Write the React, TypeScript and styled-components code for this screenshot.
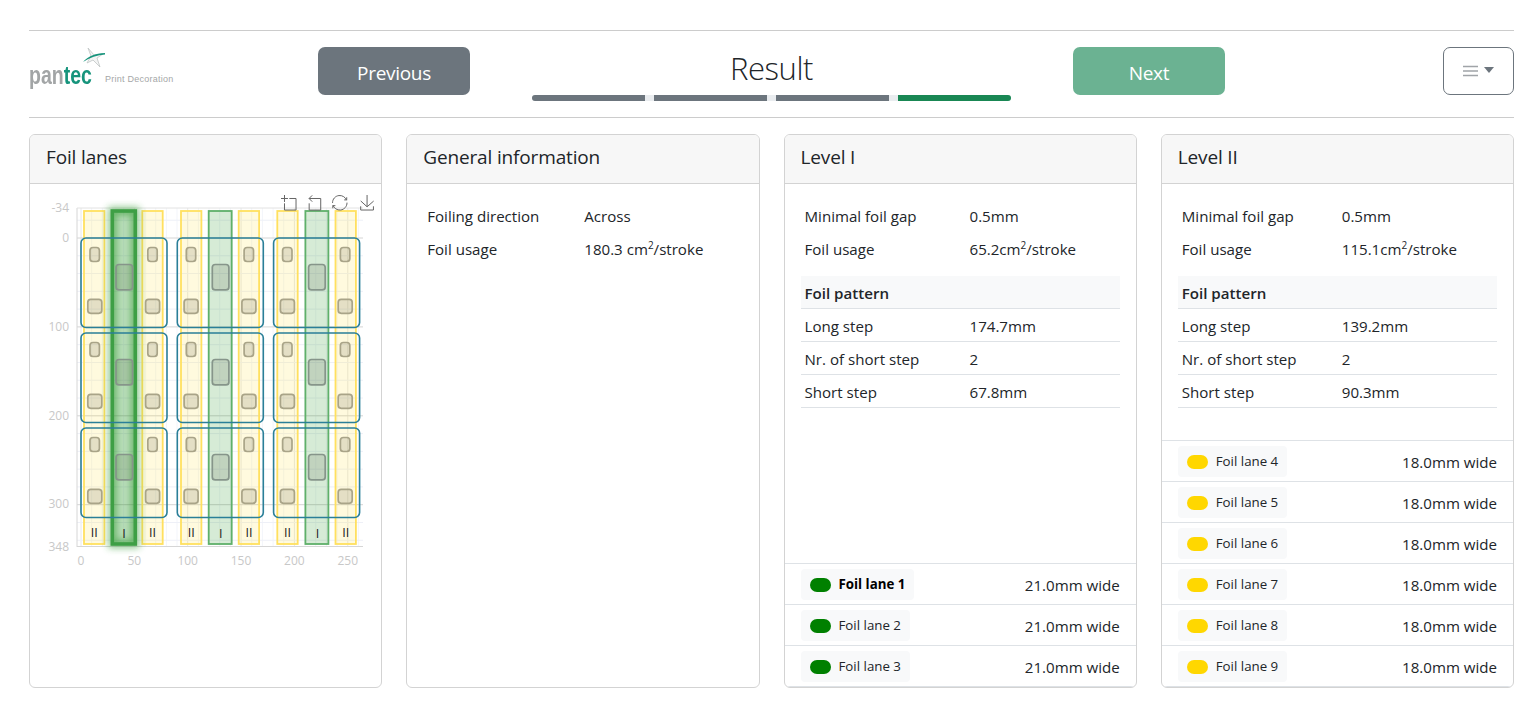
import React, { FC } from "react";
import styled, { createGlobalStyle } from "styled-components";

const FONT = `"Open Sans", "Noto Sans", sans-serif`;

const GlobalStyle = createGlobalStyle`
  html, body {
    margin: 0;
    padding: 0;
    background: #fff;
    color: #212529;
    font-family: ${FONT};
  }
  * { box-sizing: border-box; }
`;

const Page = styled.div`
  width: 1526px;
  height: 705px;
  padding: 30px 12px 0 29px;
  overflow: hidden;
`;

const Header = styled.header`
  display: grid;
  grid-template-columns: 289px 152px 62px 479px 62px 152px 218px 71px;
  height: 88px;
  padding-top: 16px;
  border-top: 1px solid #ccc;
  border-bottom: 1px solid #ccc;
`;

const LogoBox = styled.div`
  grid-column: 1;
  position: relative;
  height: 48px;
`;

const LogoWord = styled.span`
  position: absolute;
  left: 0;
  top: 14px;
  font-family: "Liberation Sans", sans-serif;
  font-size: 25px;
  line-height: 28px;
  font-weight: 700;
  color: #a2a5a6;
  transform: scaleX(0.78);
  transform-origin: left center;
`;

const LogoAccent = styled.span`
  color: #16947c;
`;

const LogoTag = styled.span`
  position: absolute;
  left: 76px;
  top: 26px;
  font-family: "Liberation Sans", sans-serif;
  font-size: 9px;
  line-height: 12px;
  letter-spacing: 0.25px;
  white-space: nowrap;
  color: #a5a7a8;
`;

const LogoStar = styled.svg`
  position: absolute;
  left: 52px;
  top: 0;
`;

const NavButton = styled.button<{ $next?: boolean }>`
  grid-column: ${(p) => (p.$next ? 6 : 2)};
  height: 48px;
  padding: 4px 0 0;
  border: 0;
  border-radius: 7px;
  font: 400 19px/24px ${FONT};
  letter-spacing: -0.3px;
  color: #fff;
  background: ${(p) => (p.$next ? "#6bb292" : "#6c757d")};
`;

const Center = styled.div`
  grid-column: 4;
  display: flex;
  flex-direction: column;
  height: 54px;
`;

const Title = styled.h1`
  margin: 0;
  height: 48px;
  font: 300 31px/42px ${FONT};
  letter-spacing: -0.4px;
  text-align: center;
  color: #212529;
`;

const Progress = styled.div`
  display: flex;
  gap: 9px;
  height: 6px;
  border-radius: 3px;
  overflow: hidden;
  background: #e9ecef;
`;

const ProgressStep = styled.div<{ $active?: boolean }>`
  flex: 1;
  background: ${(p) => (p.$active ? "#198754" : "#6c757d")};
`;

const MenuButton = styled.button`
  grid-column: 8;
  display: flex;
  align-items: center;
  justify-content: center;
  gap: 6px;
  height: 48px;
  padding: 0;
  border: 1px solid #6c757d;
  border-radius: 7px;
  background: #fff;
`;

const Caret = styled.span`
  width: 0;
  height: 0;
  margin-bottom: 2px;
  border-top: 6px solid #6c757d;
  border-left: 5.5px solid transparent;
  border-right: 5.5px solid transparent;
`;

const Cards = styled.main`
  display: grid;
  grid-template-columns: repeat(4, 1fr);
  gap: 24px;
  height: 554px;
  margin-top: 16px;
`;

const Card = styled.section`
  display: flex;
  flex-direction: column;
  min-width: 0;
  overflow: hidden;
  border: 1px solid #d3d3d3;
  border-radius: 6px;
`;

const CardHeader = styled.h2`
  flex: none;
  height: 49px;
  margin: 0;
  padding: 0 16px;
  border-bottom: 1px solid #d3d3d3;
  background: #f7f7f7;
  font: 400 19px/45px ${FONT};
  letter-spacing: -0.15px;
  color: #212529;
`;

const CardBody = styled.div`
  flex: 1;
  min-height: 0;
  padding: 16px 16px 0;
`;

const ChartBody = styled.div`
  flex: 1;
  min-height: 0;
`;

const InfoGrid = styled.dl<{ $label: number }>`
  display: grid;
  grid-template-columns: ${(p) => p.$label}px 1fr;
  margin: 0 0 11px;
`;

const InfoLabel = styled.dt`
  height: 32.5px;
  padding: 0 4px;
  font: 400 15.1px/33px ${FONT};
`;

const InfoValue = styled.dd`
  height: 32.5px;
  margin: 0;
  padding: 0 4px;
  font: 400 15.1px/33px ${FONT};
  sup {
    font-size: 10px;
    line-height: 0;
  }
`;

const PatternTitle = styled.div`
  height: 33px;
  padding: 0 4px;
  border-bottom: 1px solid #dee2e6;
  background: #f8f9fa;
  font: 600 15.1px/34px ${FONT};
  color: #212529;
`;

const PatternRow = styled.div<{ $label: number }>`
  display: grid;
  grid-template-columns: ${(p) => p.$label}px 1fr;
  height: 33px;
  padding: 0 4px;
  border-bottom: 1px solid #dee2e6;
  font: 400 15.1px/34px ${FONT};
`;

const LaneList = styled.ul`
  flex: none;
  margin: 0;
  padding: 0;
  list-style: none;
  border-bottom: 1px solid #dee2e6;
`;

const LaneRow = styled.li`
  display: flex;
  align-items: center;
  justify-content: space-between;
  height: 41px;
  padding: 0 16px;
  border-top: 1px solid #dee2e6;
`;

const LaneChip = styled.div`
  display: flex;
  align-items: center;
  gap: 8px;
  height: 31px;
  padding: 0 9px;
  border-radius: 4px;
  background: #f8f9fa;
`;

const Swatch = styled.span<{ $color: string }>`
  width: 21px;
  height: 14px;
  margin-top: 2px;
  border-radius: 7px;
  background: ${(p) => p.$color};
`;

const LaneName = styled.span<{ $bold?: boolean }>`
  font: ${(p) => (p.$bold ? 700 : 400)} 13.3px/18px ${FONT};
  color: ${(p) => (p.$bold ? "#000" : "#212529")};
`;

const LaneWidth = styled.span`
  margin-top: 2px;
  font: 400 15.1px/20px ${FONT};
  color: #212529;
`;

const AxisText = styled.text`
  font-family: ${FONT};
  font-size: 12px;
  fill: #c8c8c8;
`;

const LaneText = styled.text`
  font-family: ${FONT};
  font-size: 12.5px;
  fill: #222;
`;

// chart scale, px in the card's svg
const X0 = 51;
const Y0 = 54;
const SX = 1.067;
const SY = 0.889;
const px = (v: number) => X0 + v * SX;
const py = (v: number) => Y0 + v * SY;

const range = (from: number, to: number, step: number) => {
  const out: number[] = [];
  for (let v = from; v <= to; v += step) out.push(v);
  return out;
};

const BLANK_X = [51, 147.3, 243.6];
const BLANK_Y = [54, 149, 244];

const YELLOW_LANES = [54, 112.3, 151, 208.7, 247.3, 305.5];
const GREEN_LANES = [82.3, 179, 275.7];

const FoilChart: FC = () => (
  <svg width="352" height="420" viewBox="0 0 352 420">
    {range(0, 260, 10).map((v) => (
      <line key={`v${v}`} x1={px(v)} x2={px(v)} y1={24} y2={362} stroke={v % 50 === 0 ? "#e8e8e8" : "#f3f5fa"} />
    ))}
    {range(-20, 340, 20).map((v) => (
      <line key={`h${v}`} x1={47} x2={333} y1={py(v)} y2={py(v)} stroke={v % 100 === 0 ? "#d4d4d4" : "#eef0f7"} />
    ))}
    <line x1={47} x2={47} y1={24} y2={363} stroke="#d6d6d6" />
    <line x1={47} x2={333} y1={24} y2={24} stroke="#e2e2e2" />
    <line x1={47} x2={333} y1={362.5} y2={362.5} stroke="#d6d6d6" />

    {[[-34, 24], [0, 54], [100, 143], [200, 232], [300, 320], [348, 363]].map(([v, y]) => (
      <AxisText key={v} x={39} y={y + 4} textAnchor="end">
        {v}
      </AxisText>
    ))}
    {[0, 50, 100, 150, 200, 250].map((v) => (
      <AxisText key={v} x={px(v)} y={381} textAnchor="middle">
        {v}
      </AxisText>
    ))}

    <defs>
      <filter id="lane-glow" x="-80%" y="-10%" width="260%" height="120%">
        <feGaussianBlur stdDeviation="3.5" />
      </filter>
    </defs>

    {YELLOW_LANES.map((x) => (
      <rect key={x} x={x} y={27} width={20.4} height={333} fill="rgba(255,215,0,0.13)" stroke="#ffe05f" strokeWidth={1.8} />
    ))}
    {GREEN_LANES.map((x, i) =>
      i === 0 ? (
        <g key={x}>
          <rect x={x} y={27} width={23} height={333} fill="none" stroke="#2f9a2f" strokeWidth={8} opacity={0.55} filter="url(#lane-glow)" />
          <rect x={x} y={27} width={23} height={333} fill="rgba(0,128,0,0.28)" stroke="#3e9f45" strokeWidth={3.6} />
        </g>
      ) : (
        <rect key={x} x={x - 0.3} y={27} width={23} height={333} fill="rgba(0,128,0,0.16)" stroke="#5fb06a" strokeWidth={1.8} />
      ),
    )}

    {BLANK_X.map((x) =>
      BLANK_Y.map((y) => (
        <g key={`${x}-${y}`}>
          <rect x={x} y={y} width={86} height={89.5} rx={5} fill="none" stroke="#2a7f98" strokeWidth={1.6} />
          <g fill="rgba(90,90,70,0.16)" stroke="#a9a488" strokeWidth={1.7}>
            <rect x={x + 9} y={y + 9.5} width={9.4} height={14} rx={3} />
            <rect x={x + 6.8} y={y + 61.3} width={14} height={14} rx={3} />
            <rect x={x + 35} y={y + 26.5} width={16.6} height={25.4} rx={3} stroke="#86958a" />
            <rect x={x + 66.8} y={y + 9.5} width={9.4} height={14} rx={3} />
            <rect x={x + 64.6} y={y + 61.3} width={14} height={14} rx={3} />
          </g>
        </g>
      )),
    )}

    {YELLOW_LANES.map((x) => (
      <LaneText key={x} x={x + 10.2} y={353} textAnchor="middle">
        II
      </LaneText>
    ))}
    {GREEN_LANES.map((x) => (
      <LaneText key={x} x={x + 11.7} y={354} textAnchor="middle">
        I
      </LaneText>
    ))}

    <g fill="none" stroke="#666" strokeWidth={1}>
      <g transform="translate(251 11) scale(0.259)">
        <path vectorEffect="non-scaling-stroke" d="M0,13.5h26.9 M13.5,26.9V0 M32.1,13.5H58V58H13.5 V32.1" />
      </g>
      <g transform="translate(276.5 11) scale(0.259)">
        <path vectorEffect="non-scaling-stroke" d="M22,1.4L9.9,13.5l12.3,12.3 M10.3,13.5H54.9v44.6 H10.3v-26" />
      </g>
      <g transform="translate(302 11) scale(0.259)">
        <path
          vectorEffect="non-scaling-stroke"
          d="M3.8,33.4 M47,18.9h9.8V8.7 M56.3,20.1 C52.1,9,40.5,0.6,26.8,2.1C12.6,3.7,1.6,16.2,2.1,30.6 M13,41.1H3.1v10.2 M3.7,39.9c4.2,11.1,15.8,19.5,29.5,18 c14.2-1.6,25.2-14.1,24.7-28.5"
        />
      </g>
      <g transform="translate(329.5 11) scale(0.259)">
        <path vectorEffect="non-scaling-stroke" d="M4.7,22.9L29.3,45.5L54.7,23.4M4.6,43.6L4.6,58L53.8,58L53.8,43.6M29.2,45.1L29.2,0" />
      </g>
    </g>
  </svg>
);

interface Lane {
  name: string;
  width: string;
  color: string;
  bold?: boolean;
}

const LanesBlock: FC<{ lanes: Lane[] }> = ({ lanes }) => (
  <LaneList>
    {lanes.map((l) => (
      <LaneRow key={l.name}>
        <LaneChip>
          <Swatch $color={l.color} />
          <LaneName $bold={l.bold}>{l.name}</LaneName>
        </LaneChip>
        <LaneWidth>{l.width}</LaneWidth>
      </LaneRow>
    ))}
  </LaneList>
);

interface LevelProps {
  title: string;
  labelWidth: number;
  usage: string;
  longStep: string;
  shortStep: string;
  lanes: Lane[];
}

const LevelCard: FC<LevelProps> = ({ title, labelWidth, usage, longStep, shortStep, lanes }) => (
  <Card>
    <CardHeader>{title}</CardHeader>
    <CardBody>
      <InfoGrid $label={labelWidth}>
        <InfoLabel>Minimal foil gap</InfoLabel>
        <InfoValue>0.5mm</InfoValue>
        <InfoLabel>Foil usage</InfoLabel>
        <InfoValue>
          {usage}cm<sup>2</sup>/stroke
        </InfoValue>
      </InfoGrid>
      <PatternTitle>Foil pattern</PatternTitle>
      <PatternRow $label={labelWidth}>
        <span>Long step</span>
        <span>{longStep}</span>
      </PatternRow>
      <PatternRow $label={labelWidth}>
        <span>Nr. of short step</span>
        <span>2</span>
      </PatternRow>
      <PatternRow $label={labelWidth}>
        <span>Short step</span>
        <span>{shortStep}</span>
      </PatternRow>
    </CardBody>
    <LanesBlock lanes={lanes} />
  </Card>
);

const GREEN = "#008000";
const YELLOW = "#ffd700";

const levelOne: Lane[] = [
  { name: "Foil lane 1", width: "21.0mm wide", color: GREEN, bold: true },
  { name: "Foil lane 2", width: "21.0mm wide", color: GREEN },
  { name: "Foil lane 3", width: "21.0mm wide", color: GREEN },
];

const levelTwo: Lane[] = [4, 5, 6, 7, 8, 9].map((n) => ({
  name: `Foil lane ${n}`,
  width: "18.0mm wide",
  color: YELLOW,
}));

export default function App() {
  return (
    <Page>
      <GlobalStyle />
      <Header>
        <LogoBox>
          <LogoStar width="28" height="22" viewBox="0 0 28 22">
            <path
              d="M7 1 L13 8 L22 7 L16 11 L19 20 L12 13 L6 16 L10 9 Z"
              fill="#f3f4f4"
              stroke="#bfc4c4"
              strokeWidth="0.8"
            />
            <path d="M2 15 C7 9 14 6.5 24 6 L24 7.5 C16 8 9 10.5 2 15 Z" fill="#16947c" />
          </LogoStar>
          <LogoWord>
            pan<LogoAccent>tec</LogoAccent>
          </LogoWord>
          <LogoTag>Print Decoration</LogoTag>
        </LogoBox>
        <NavButton>Previous</NavButton>
        <Center>
          <Title>Result</Title>
          <Progress>
            <ProgressStep />
            <ProgressStep />
            <ProgressStep />
            <ProgressStep $active />
          </Progress>
        </Center>
        <NavButton $next>Next</NavButton>
        <MenuButton aria-label="Menu">
          <svg width="15" height="12" viewBox="0 0 15 12">
            <path d="M0 1.5h15M0 6h15M0 10.5h15" stroke="#a0a4a8" strokeWidth="1.6" />
          </svg>
          <Caret />
        </MenuButton>
      </Header>
      <Cards>
        <Card>
          <CardHeader>Foil lanes</CardHeader>
          <ChartBody>
            <FoilChart />
          </ChartBody>
        </Card>
        <Card>
          <CardHeader>General information</CardHeader>
          <CardBody>
            <InfoGrid $label={157}>
              <InfoLabel>Foiling direction</InfoLabel>
              <InfoValue>Across</InfoValue>
              <InfoLabel>Foil usage</InfoLabel>
              <InfoValue>
                180.3 cm<sup>2</sup>/stroke
              </InfoValue>
            </InfoGrid>
          </CardBody>
        </Card>
        <LevelCard title="Level I" labelWidth={165} usage="65.2" longStep="174.7mm" shortStep="67.8mm" lanes={levelOne} />
        <LevelCard title="Level II" labelWidth={160} usage="115.1" longStep="139.2mm" shortStep="90.3mm" lanes={levelTwo} />
      </Cards>
    </Page>
  );
}
